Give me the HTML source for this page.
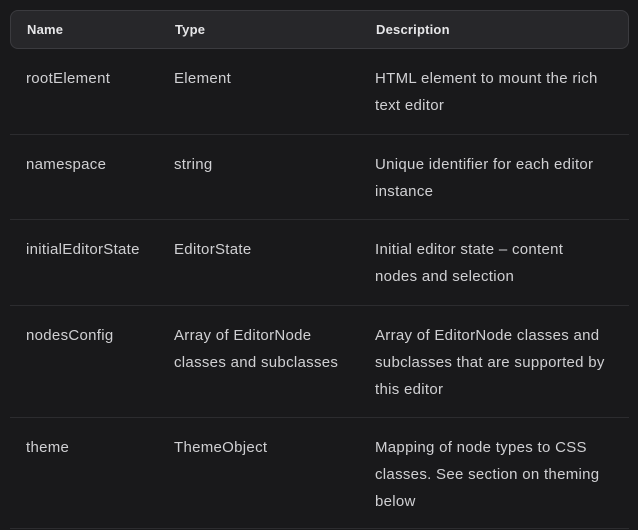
<!DOCTYPE html>
<html><head><style>
html,body{margin:0;padding:0;background:#19191b;width:638px;height:530px;overflow:hidden}
body{font-family:"Liberation Sans",sans-serif;color:#d4d4d6}
.wrap{position:absolute;left:10px;top:10px;width:619px}
.head{height:37px;background:#27272a;border:1px solid #3b3b3f;border-radius:8px;position:relative;font-size:13px;font-weight:bold;color:#e6e6e8;letter-spacing:0.2px}
.head span{position:absolute;top:11px}
.row{position:relative;border-bottom:1px solid #2c2c2f;font-size:15px;line-height:27px;color:#d0d0d3;letter-spacing:0.3px}
.row div{position:absolute;top:16px}
.c1{left:16px}.c2{left:164px;width:175px}.c3{left:365px;width:232px}
</style></head><body>
<div class="wrap">
<div class="head"><span style="left:16px">Name</span><span style="left:164px">Type</span><span style="left:365px">Description</span></div>
<div class="row" style="height:85px"><div class="c1">rootElement</div><div class="c2">Element</div><div class="c3">HTML element to mount the rich text editor</div></div>
<div class="row" style="height:84px"><div class="c1">namespace</div><div class="c2">string</div><div class="c3">Unique identifier for each editor instance</div></div>
<div class="row" style="height:85px"><div class="c1">initialEditorState</div><div class="c2">EditorState</div><div class="c3">Initial editor state – content<br>nodes and selection</div></div>
<div class="row" style="height:111px"><div class="c1">nodesConfig</div><div class="c2">Array of EditorNode<br>classes and subclasses</div><div class="c3">Array of EditorNode classes and subclasses that are supported by this editor</div></div>
<div class="row" style="height:110px"><div class="c1">theme</div><div class="c2">ThemeObject</div><div class="c3">Mapping of node types to CSS classes. See section on theming below</div></div>
</div>
</body></html>
